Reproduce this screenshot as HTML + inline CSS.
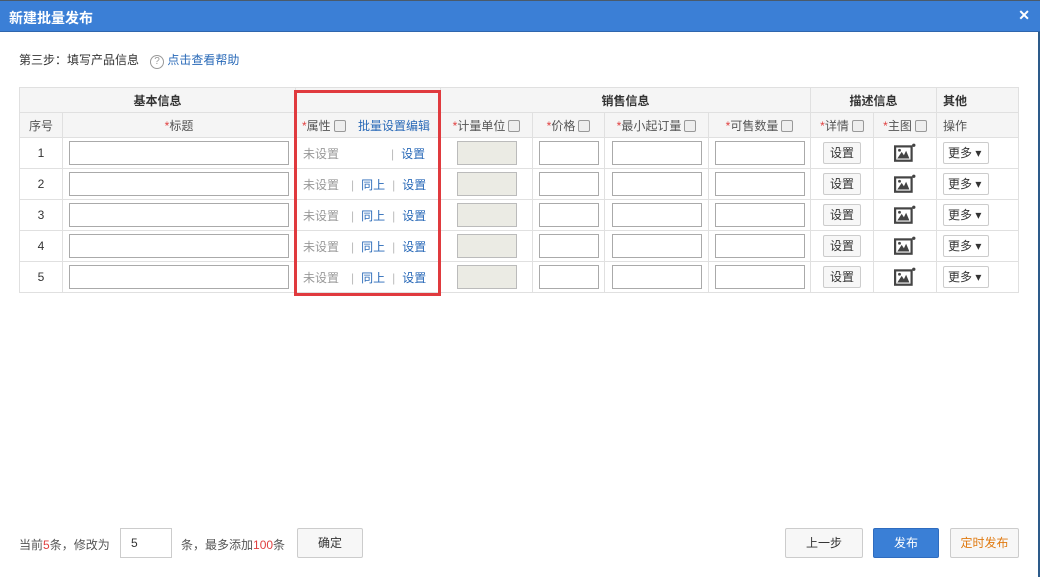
<!DOCTYPE html>
<html><head><meta charset="utf-8"><style>
*{margin:0;padding:0;box-sizing:border-box}
body{width:1040px;height:577px;background:#fff;font-family:"Liberation Sans","Noto Sans CJK SC",sans-serif;font-size:12px;color:#333;position:relative;overflow:hidden}
.bar{position:absolute;left:0;top:0;width:1040px;height:32px;background:#3b7fd6;border-top:1px solid #4a5a6a;border-bottom:1px solid #2f66ad}
.bar .t{position:absolute;left:9px;top:7px;color:#fff;font-weight:bold;font-size:14px}
.bar .x{position:absolute;right:10px;top:6px;color:#fff;font-weight:bold;font-size:14px}
.rb{position:absolute;right:0;top:32px;width:2px;height:545px;background:#2d5b8a}
.a{position:absolute}
table{position:absolute;left:19px;top:87px;border-collapse:collapse;table-layout:fixed}
td{border:1px solid #e0e0e0;text-align:center;height:31px;padding:0;font-size:12px}
tr.h1 td{height:25px;background:#f5f5f5;font-weight:bold;color:#333}
tr.h2 td{height:25px;background:#f5f5f5;color:#555}
.r{color:#e04040}
.cb{display:inline-block;width:12px;height:12px;border:1px solid #999;border-radius:2px;background:#eee;vertical-align:-2px;margin-left:3px}
.in{display:inline-block;border:1px solid #aaa;height:24px;vertical-align:middle;background:#fff}
.g{background:#ebebe4;border-color:#bbb}
.btn{display:inline-block;border:1px solid #ccc;background:#f7f7f7;height:22px;line-height:20px;padding:0 6px;color:#333;border-radius:2px}
.more{display:inline-block;border:1px solid #ccc;background:#fff;height:22px;line-height:20px;width:46px;padding-left:4px;color:#333;border-radius:2px;text-align:left}
.blue{color:#2a6ab8}
.gr{color:#999}
.sep{color:#bbb;margin:0 7px}
.red{position:absolute;left:294px;top:90px;width:147px;height:206px;border:3px solid #e03a3e}
.fb{position:absolute;top:528px;height:30px;line-height:28px;border:1px solid #ccc;background:#f7f7f7;text-align:center;font-size:12px;border-radius:2px}
</style></head><body>
<div class="bar"><span class="t">新建批量发布</span><span class="x">✕</span></div>
<div class="rb"></div>
<div class="a" style="left:19px;top:51px;font-size:12px;color:#333">第三步：填写产品信息</div>
<div class="a" style="left:150px;top:51px;font-size:12px"><span style="display:inline-block;width:14px;height:14px;border:1px solid #999;border-radius:50%;font-size:10px;line-height:12px;text-align:center;color:#999">?</span> <span class="blue">点击查看帮助</span></div>
<table>
<colgroup><col style="width:43px"><col style="width:233px"><col style="width:145px"><col style="width:92px"><col style="width:72px"><col style="width:104px"><col style="width:102px"><col style="width:63px"><col style="width:63px"><col style="width:82px"></colgroup>
<tr class="h1"><td colspan="2">基本信息</td><td></td><td colspan="4">销售信息</td><td colspan="2">描述信息</td><td style="text-align:left;padding-left:6px">其他</td></tr>
<tr class="h2"><td>序号</td><td><span class="r">*</span>标题</td><td style="text-align:left;padding-left:6px"><span class="r">*</span>属性<span class="cb"></span> <span class="blue" style="margin-left:9px">批量设置编辑</span></td><td><span class="r">*</span>计量单位<span class="cb"></span></td><td><span class="r">*</span>价格<span class="cb"></span></td><td><span class="r">*</span>最小起订量<span class="cb"></span></td><td><span class="r">*</span>可售数量<span class="cb"></span></td><td><span class="r">*</span>详情<span class="cb"></span></td><td><span class="r">*</span>主图<span class="cb"></span></td><td style="text-align:left;padding-left:6px">操作</td></tr>
<tr><td>1</td><td><span class="in" style="width:220px"></span></td><td style="text-align:left;padding-left:7px"><span class="gr">未设置</span><span style="margin-left:52px" class="sep">|</span><span class="blue">设置</span></td><td><span class="in g" style="width:60px"></span></td><td><span class="in" style="width:60px"></span></td><td><span class="in" style="width:90px"></span></td><td><span class="in" style="width:90px"></span></td><td><span class="btn">设置</span></td><td><svg width="22" height="20" viewBox="0 0 20 18" style="vertical-align:middle"><rect x="1" y="3" width="15" height="13" fill="none" stroke="#444" stroke-width="2"/><path d="M3 14 L7 8 L9 11 L11 7 L14 14Z" fill="#444"/><circle cx="5" cy="6.5" r="1.3" fill="#444"/><circle cx="18" cy="2" r="1.5" fill="#444"/></svg></td><td style="text-align:left;padding-left:6px"><span class="more">更多 ▾</span></td></tr>
<tr><td>2</td><td><span class="in" style="width:220px"></span></td><td style="text-align:left;padding-left:7px"><span class="gr">未设置</span><span class="sep" style="margin-left:12px">|</span><span class="blue">同上</span><span class="sep">|</span><span class="blue">设置</span></td><td><span class="in g" style="width:60px"></span></td><td><span class="in" style="width:60px"></span></td><td><span class="in" style="width:90px"></span></td><td><span class="in" style="width:90px"></span></td><td><span class="btn">设置</span></td><td><svg width="22" height="20" viewBox="0 0 20 18" style="vertical-align:middle"><rect x="1" y="3" width="15" height="13" fill="none" stroke="#444" stroke-width="2"/><path d="M3 14 L7 8 L9 11 L11 7 L14 14Z" fill="#444"/><circle cx="5" cy="6.5" r="1.3" fill="#444"/><circle cx="18" cy="2" r="1.5" fill="#444"/></svg></td><td style="text-align:left;padding-left:6px"><span class="more">更多 ▾</span></td></tr>
<tr><td>3</td><td><span class="in" style="width:220px"></span></td><td style="text-align:left;padding-left:7px"><span class="gr">未设置</span><span class="sep" style="margin-left:12px">|</span><span class="blue">同上</span><span class="sep">|</span><span class="blue">设置</span></td><td><span class="in g" style="width:60px"></span></td><td><span class="in" style="width:60px"></span></td><td><span class="in" style="width:90px"></span></td><td><span class="in" style="width:90px"></span></td><td><span class="btn">设置</span></td><td><svg width="22" height="20" viewBox="0 0 20 18" style="vertical-align:middle"><rect x="1" y="3" width="15" height="13" fill="none" stroke="#444" stroke-width="2"/><path d="M3 14 L7 8 L9 11 L11 7 L14 14Z" fill="#444"/><circle cx="5" cy="6.5" r="1.3" fill="#444"/><circle cx="18" cy="2" r="1.5" fill="#444"/></svg></td><td style="text-align:left;padding-left:6px"><span class="more">更多 ▾</span></td></tr>
<tr><td>4</td><td><span class="in" style="width:220px"></span></td><td style="text-align:left;padding-left:7px"><span class="gr">未设置</span><span class="sep" style="margin-left:12px">|</span><span class="blue">同上</span><span class="sep">|</span><span class="blue">设置</span></td><td><span class="in g" style="width:60px"></span></td><td><span class="in" style="width:60px"></span></td><td><span class="in" style="width:90px"></span></td><td><span class="in" style="width:90px"></span></td><td><span class="btn">设置</span></td><td><svg width="22" height="20" viewBox="0 0 20 18" style="vertical-align:middle"><rect x="1" y="3" width="15" height="13" fill="none" stroke="#444" stroke-width="2"/><path d="M3 14 L7 8 L9 11 L11 7 L14 14Z" fill="#444"/><circle cx="5" cy="6.5" r="1.3" fill="#444"/><circle cx="18" cy="2" r="1.5" fill="#444"/></svg></td><td style="text-align:left;padding-left:6px"><span class="more">更多 ▾</span></td></tr>
<tr><td>5</td><td><span class="in" style="width:220px"></span></td><td style="text-align:left;padding-left:7px"><span class="gr">未设置</span><span class="sep" style="margin-left:12px">|</span><span class="blue">同上</span><span class="sep">|</span><span class="blue">设置</span></td><td><span class="in g" style="width:60px"></span></td><td><span class="in" style="width:60px"></span></td><td><span class="in" style="width:90px"></span></td><td><span class="in" style="width:90px"></span></td><td><span class="btn">设置</span></td><td><svg width="22" height="20" viewBox="0 0 20 18" style="vertical-align:middle"><rect x="1" y="3" width="15" height="13" fill="none" stroke="#444" stroke-width="2"/><path d="M3 14 L7 8 L9 11 L11 7 L14 14Z" fill="#444"/><circle cx="5" cy="6.5" r="1.3" fill="#444"/><circle cx="18" cy="2" r="1.5" fill="#444"/></svg></td><td style="text-align:left;padding-left:6px"><span class="more">更多 ▾</span></td></tr>
</table>
<div class="red"></div>
<div class="a" style="left:19px;top:536px;color:#555">当前<span class="r">5</span>条，修改为</div>
<div class="a" style="left:120px;top:528px;width:52px;height:30px;border:1px solid #ccc;line-height:28px;padding-left:10px;color:#333">5</div>
<div class="a" style="left:181px;top:536px;color:#555">条，最多添加<span class="r">100</span>条</div>
<div class="fb" style="left:297px;width:66px">确定</div>
<div class="fb" style="left:785px;width:78px">上一步</div>
<div class="fb" style="left:873px;width:66px;background:#3a7fd6;border-color:#2f6cbf;color:#fff">发布</div>
<div class="fb" style="left:950px;width:69px;color:#e07a10">定时发布</div>
</body></html>
